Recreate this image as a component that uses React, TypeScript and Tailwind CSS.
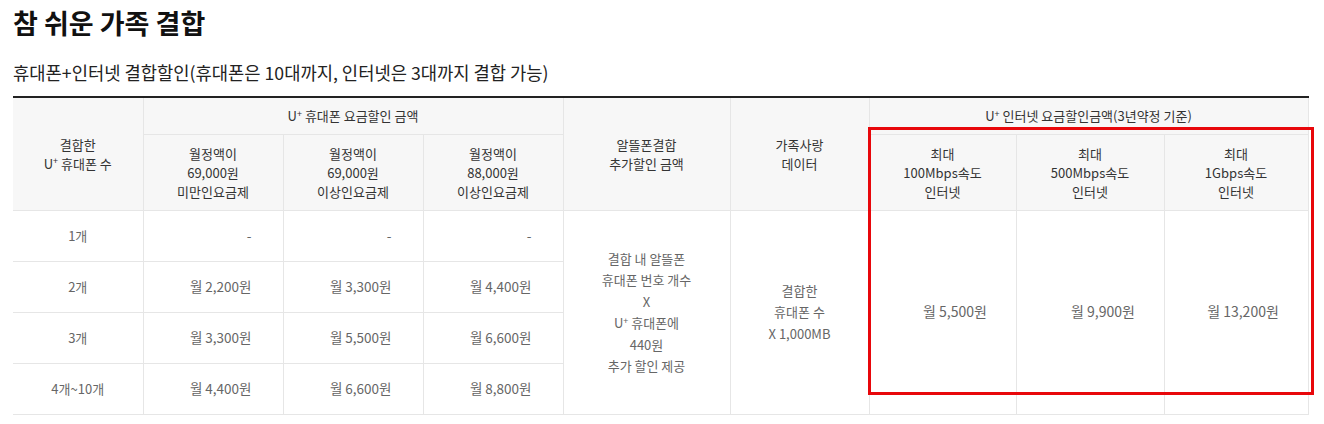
const font = { fontFamily: "'Noto Sans CJK KR', 'Noto Sans', sans-serif" };

function Uplus() {
  return (
    <>
      U<sup className="text-[9px]">+</sup>
    </>
  );
}

const rows = [
  { count: "1개", a: "-", b: "-", c: "-" },
  { count: "2개", a: "월 2,200원", b: "월 3,300원", c: "월 4,400원" },
  { count: "3개", a: "월 3,300원", b: "월 5,500원", c: "월 6,600원" },
  { count: "4개~10개", a: "월 4,400원", b: "월 6,600원", c: "월 8,800원" },
];

const th =
  "border border-[#e6e6e6] bg-[#f7f7f7] font-normal text-[#333] text-[13px] leading-[19px] align-middle text-center";
const td =
  "border border-[#e6e6e6] bg-white text-[#666] text-[13px] leading-[21.5px] align-middle text-center";
const tdRight =
  "border border-[#e6e6e6] bg-white text-[#666] text-[13.5px] leading-[21.5px] align-middle text-right pr-[31px]";
const tdNet =
  "border border-[#e6e6e6] bg-white text-[#666] text-[14px] leading-[21.5px] align-middle text-center";

export default function App() {
  return (
    <div className="bg-white w-[1324px] h-[424px] overflow-hidden" style={font}>
      <div className="px-[13px]">
        {/* Title */}
        <h1 className="pt-[3px] text-[27px] leading-[40px] font-bold text-[#111]">
          참 쉬운 가족 결합
        </h1>
        <p className="mt-[17px] text-[17.7px] leading-[24px] text-[#222]">
          휴대폰+인터넷 결합할인(휴대폰은 10대까지, 인터넷은 3대까지 결합 가능)
        </p>

        {/* Table */}
        <div className="relative mt-[12px] w-[1295px]">
          <table className="w-[1295px] table-fixed border-collapse border-t-2 border-t-[#222]">
            <colgroup>
              <col className="w-[130px]" />
              <col className="w-[140px]" />
              <col className="w-[140px]" />
              <col className="w-[140px]" />
              <col className="w-[167px]" />
              <col className="w-[139px]" />
              <col className="w-[147px]" />
              <col className="w-[148px]" />
              <col className="w-[144px]" />
            </colgroup>
            <thead>
              <tr className="h-[37px]">
                <th rowSpan={2} className={`${th} border-l-0 border-t-2 border-t-[#222]`}>
                  결합한
                  <br />
                  <Uplus /> 휴대폰 수
                </th>
                <th colSpan={3} className={`${th} border-t-2 border-t-[#222]`}>
                  <Uplus /> 휴대폰 요금할인 금액
                </th>
                <th rowSpan={2} className={`${th} border-t-2 border-t-[#222]`}>
                  알뜰폰결합
                  <br />
                  추가할인 금액
                </th>
                <th rowSpan={2} className={`${th} border-t-2 border-t-[#222]`}>
                  가족사랑
                  <br />
                  데이터
                </th>
                <th colSpan={3} className={`${th} border-t-2 border-t-[#222]`}>
                  <Uplus /> 인터넷 요금할인금액(3년약정 기준)
                </th>
              </tr>
              <tr className="h-[76px]">
                <th className={th}>
                  월정액이
                  <br />
                  69,000원
                  <br />
                  미만인요금제
                </th>
                <th className={th}>
                  월정액이
                  <br />
                  69,000원
                  <br />
                  이상인요금제
                </th>
                <th className={th}>
                  월정액이
                  <br />
                  88,000원
                  <br />
                  이상인요금제
                </th>
                <th className={th}>
                  최대
                  <br />
                  100Mbps속도
                  <br />
                  인터넷
                </th>
                <th className={th}>
                  최대
                  <br />
                  500Mbps속도
                  <br />
                  인터넷
                </th>
                <th className={th}>
                  최대
                  <br />
                  1Gbps속도
                  <br />
                  인터넷
                </th>
              </tr>
            </thead>
            <tbody>
              {rows.map((r, i) => (
                <tr key={r.count} className="h-[51px]">
                  <td className={`${td} border-l-0`}>{r.count}</td>
                  <td className={tdRight}>{r.a}</td>
                  <td className={tdRight}>{r.b}</td>
                  <td className={tdRight}>{r.c}</td>
                  {i === 0 && (
                    <>
                      <td rowSpan={4} className={td}>
                        결합 내 알뜰폰
                        <br />
                        휴대폰 번호 개수
                        <br />X
                        <br />
                        <Uplus /> 휴대폰에
                        <br />
                        440원
                        <br />
                        추가 할인 제공
                      </td>
                      <td rowSpan={4} className={td}>
                        결합한
                        <br />
                        휴대폰 수
                        <br />X 1,000MB
                      </td>
                      <td rowSpan={4} className={`${tdNet} pl-[25px]`}>
                        월 5,500원
                      </td>
                      <td rowSpan={4} className={`${tdNet} pl-[26px]`}>
                        월 9,900원
                      </td>
                      <td rowSpan={4} className={`${tdNet} pl-[14px]`}>
                        월 13,200원
                      </td>
                    </>
                  )}
                </tr>
              ))}
            </tbody>
          </table>

          {/* highlight box */}
          <div className="absolute left-[855px] top-[31px] w-[446px] h-[268px] border-[3px] border-[#e8070b] pointer-events-none" />
        </div>
      </div>
    </div>
  );
}
